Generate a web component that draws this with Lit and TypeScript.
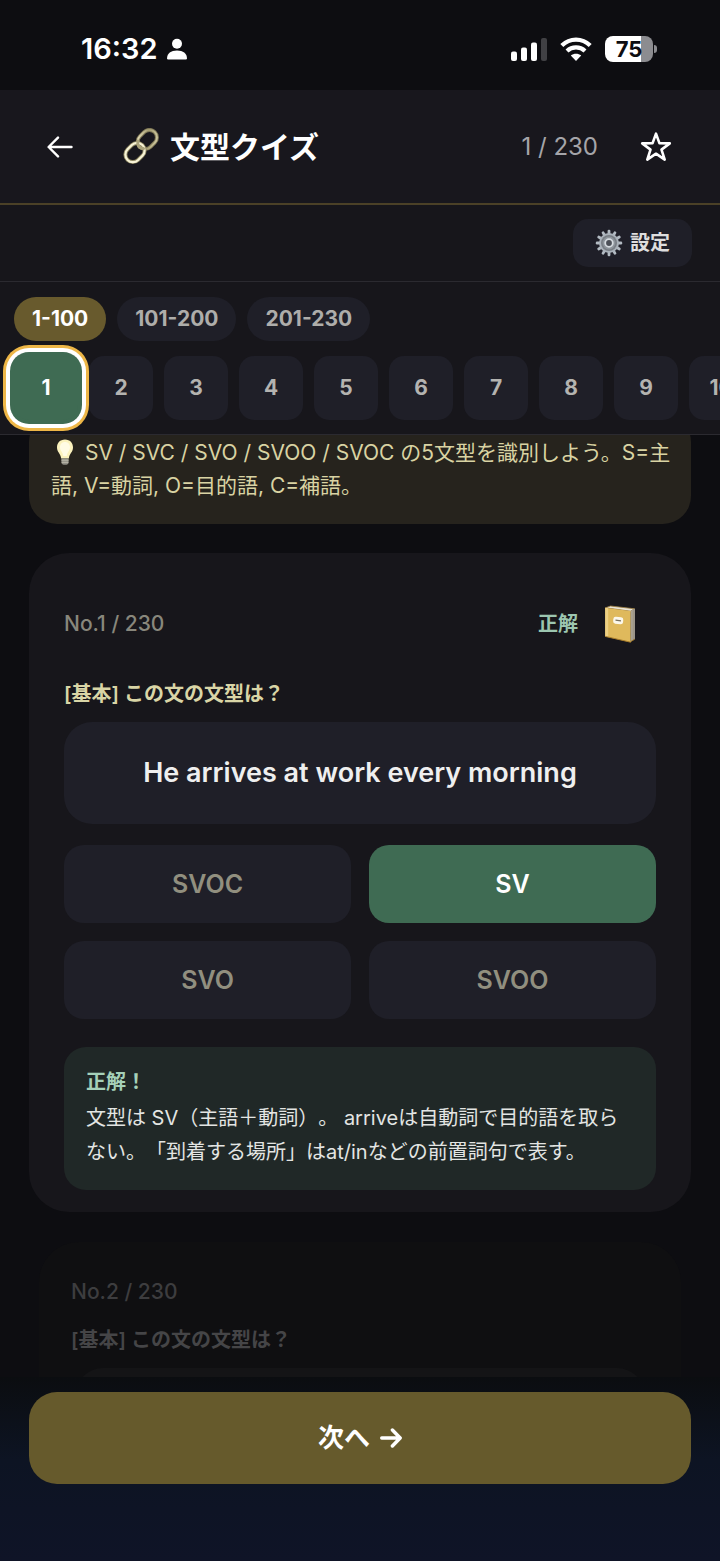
import { LitElement, html, css, svg } from "lit";
import { customElement, state } from "lit/decorators.js";
import { classMap } from "lit/directives/class-map.js";

const TOTAL = 230;

const arrowLeft = html`<svg class="ic-arrow" viewBox="0 0 26 22" aria-hidden="true">
  <path d="M24.5 11H1.8M11 1.6L1.6 11L11 20.4" fill="none" stroke="currentColor" stroke-width="2.4" stroke-linecap="round" stroke-linejoin="round"/>
</svg>`;

const arrowRight = html`<svg class="ic-next" viewBox="0 0 22 20" aria-hidden="true">
  <path d="M1.7 10H20M12.4 2L20.2 10L12.4 18" fill="none" stroke="currentColor" stroke-width="3.4" stroke-linecap="round" stroke-linejoin="round"/>
</svg>`;

const star = html`<svg class="ic-star" viewBox="0 0 32 32" aria-hidden="true">
  <path d="M16 2.6L19.4 12.1L29.8 12.4L21.5 18.6L24.7 28.6L16 22.7L7.3 28.6L10.5 18.6L2.2 12.4L12.6 12.1Z" fill="none" stroke="currentColor" stroke-width="2.6" stroke-linejoin="round"/>
</svg>`;

const linkIcon = html`<svg class="ic-link" viewBox="0 0 38 38" aria-hidden="true">
  <defs>
    <linearGradient id="lk" x1="0" y1="0" x2="1" y2="1">
      <stop offset="0" stop-color="#efe9c4"/><stop offset=".5" stop-color="#a39b70"/><stop offset="1" stop-color="#d8d2aa"/>
    </linearGradient>
  </defs>
  <g fill="none">
    <rect x="14.8" y="4" width="21" height="15" rx="7.5" transform="rotate(-45 25.3 11.5)" stroke="#7d7655" stroke-width="4"/>
    <rect x="14.8" y="4" width="21" height="15" rx="7.5" transform="rotate(-45 25.3 11.5)" stroke="url(#lk)" stroke-width="2"/>
    <rect x="2.5" y="17" width="21" height="15" rx="7.5" transform="rotate(-45 13 24.5)" stroke="#8d8661" stroke-width="4"/>
    <rect x="2.5" y="17" width="21" height="15" rx="7.5" transform="rotate(-45 13 24.5)" stroke="#f7f3d6" stroke-width="2.2"/>
    <path d="M16 13C14.800 17.500 17 20.500 21.500 20.500" stroke="#a9a27b" stroke-width="3" stroke-linecap="round"/>
  </g>
</svg>`;

const gearTeeth = Array.from({ length: 12 }, (_, i) => svg`<rect x="12.6" y="0.8" width="2.8" height="6" rx="1.2" transform="rotate(${i * 30} 14 14)"/>`);
const gear = html`<svg class="ic-gear" viewBox="0 0 28 28" aria-hidden="true">
  <g fill="#b3bbc3">${gearTeeth}</g>
  <circle cx="14" cy="14" r="10" fill="#a9b1b9"/>
  <circle cx="14" cy="14" r="8" fill="#777d84"/>
  <circle cx="14" cy="14" r="6.4" fill="#8d949b"/>
  <circle cx="14" cy="14" r="3.8" fill="#4b4f57" stroke="#d5dbe0" stroke-width="1.8"/>
</svg>`;

const bulb = html`<svg class="ic-bulb" viewBox="0 0 20 28" aria-hidden="true">
  <path d="M10 1.4C4.900 1.400 2 5 2 9.300C2 14.200 5.600 15.600 6.200 20.400H13.800C14.400 15.600 18 14.200 18 9.300C18 5 15.100 1.400 10 1.400Z" fill="#fbf2bd"/>
  <path d="M10 4C7 4 5 6.200 5 9.300C5 12.600 7.600 14 8.300 18H11.700C12.400 14 15 12.600 15 9.300C15 6.200 13 4 10 4Z" fill="#fffbe4"/>
  <path d="M6.400 20.400H13.600V24.200C13.600 26 12.200 26.800 10 26.800C7.800 26.800 6.400 26 6.400 24.200Z" fill="#8f8d84"/>
  <path d="M6.400 22.200H13.600M6.600 24.300H13.400" stroke="#c9c6b8" stroke-width=".8"/>
</svg>`;

const book = html`<svg class="ic-book" viewBox="0 0 32 38" aria-hidden="true">
  <path d="M1.500 2.800L6.500 1L30.600 3.800L26.400 6.200Z" fill="#e9e3d6" stroke="#9c7c3c" stroke-width=".8"/>
  <path d="M26.400 6L30.800 3.800V34L26.600 36.800Z" fill="#b9b1a3"/>
  <path d="M28 5.400V35.600M29.400 4.700V34.600" stroke="#857c6c" stroke-width=".6"/>
  <path d="M26.200 36.900L30.800 34.200" stroke="#9a7429" stroke-width="1"/>
  <path d="M1.200 2.800L26.600 6V37.200L1.200 31.400Z" fill="#dfb95c"/>
  <path d="M1.200 2.800L4.200 3.200V32L1.200 31.400Z" fill="#edd084"/>
  <path d="M1.200 31.400L26.600 37.200" stroke="#a87d2c" stroke-width="1"/>
  <rect x="9.200" y="12" width="10" height="7" rx="2.400" fill="#fbf7ea" transform="rotate(6 14 15.500)"/>
  <path d="M11.500 15.200L17 15.800" stroke="#77705f" stroke-width="1.300"/>
</svg>`;

@customElement("app-root")
export class AppRoot extends LitElement {
  @state() private range = 0;
  @state() private answer = "SV";

  static styles = css`
    :host {
      display: flex;
      flex-direction: column;
      height: 100vh;
      overflow: hidden;
      background: #0d0d11;
      color: #fff;
      font-family: Inter, "Noto Sans CJK JP", sans-serif;
      font-size: 20px;
      line-height: 32px;
      text-spacing-trim: space-all;
    }
    * { box-sizing: border-box; }
    button { font: inherit; color: inherit; border: 0; margin: 0; padding: 0; background: none; cursor: pointer; }
    svg { display: block; flex: none; }

    .status { display: flex; align-items: center; justify-content: space-between; flex: none; height: 90px; padding: 8px 63px 0 81px; }
    .clock { display: flex; align-items: center; gap: 9px; font-size: 29px; font-weight: 600; }
    .ic-user { width: 20px; height: 22px; }
    .signals { display: flex; align-items: center; gap: 13px; }
    .ic-cell { width: 36px; height: 24px; }
    .ic-wifi { width: 32px; height: 24px; }
    .battery { display: flex; align-items: center; gap: 1px; }
    .cell { width: 48px; height: 26px; border-radius: 8px; background: linear-gradient(90deg, #fff 75%, #8c8c90 75%); color: #0d0d11; font-size: 22px; line-height: 26px; font-weight: 700; text-align: center; }
    .nub { width: 3px; height: 8px; border-radius: 0 3px 3px 0; background: #8c8c90; }

    .head { display: flex; align-items: center; flex: none; height: 115px; padding: 0 48px 0 46px; background: #18171d; border-bottom: 2px solid #4b4127; }
    .ic-arrow { width: 28px; height: 22px; }
    .title { display: flex; align-items: center; gap: 10px; margin: 0 0 0 48px; font-size: 30px; line-height: 40px; font-weight: 700; }
    .ic-link { width: 38px; height: 38px; }
    .count { margin-left: auto; color: #a5a5a9; font-size: 24px; }
    .fav { margin-left: 42px; }
    .ic-star { width: 32px; height: 32px; }

    .tools { display: flex; justify-content: flex-end; flex: none; padding: 14px 28px; background: #17161b; border-bottom: 1px solid #2b2a30; }
    .settings { display: flex; align-items: center; gap: 7px; height: 48px; padding: 0 22px; border-radius: 15px; background: #1f1f28; color: #dedede; font-weight: 600; }
    .ic-gear { width: 28px; height: 28px; }

    .nav { flex: none; overflow: hidden; padding: 15px 14px 14px; background: #17161b; border-bottom: 1px solid #2b2a30; }
    .ranges, .numbers { display: flex; gap: 11px; font-size: 21px; font-weight: 700; }
    .range { height: 44px; padding: 0 18px; border-radius: 22px; background: #1f1f28; color: #aeadaa; }
    .range.on { background: #685a2d; color: #fff; }
    .numbers { margin-top: 15px; }
    .num { flex: none; width: 64px; height: 64px; border-radius: 15px; background: #1f1f28; color: #b4b3b0; }
    .num.on { position: relative; z-index: 1; background: #3f6b53; color: #fff; box-shadow: 0 0 0 4px #3f6b53, 0 0 0 8px #fff, 0 0 0 11px #edb647; }

    .feed { flex: 1 1 0; min-height: 0; overflow: hidden; padding: 0 29px; }
    .hint { margin: -21px 0 29px; padding: 22px 18px 22px 22px; border-radius: 28px; background: #26231d; color: #d9d3a3; font-size: 21px; line-height: 33px; }
    .hint .ic-bulb { display: inline-block; width: 20px; height: 28px; margin: 0 10px 0 4px; vertical-align: -6px; }

    .card { padding: 36px 35px 22px; border-radius: 40px; background: #17161b; }
    .row { display: flex; align-items: center; height: 70px; }
    .no { color: #88877c; font-size: 21px; font-weight: 500; }
    .state { margin-left: auto; color: #9cc6b0; font-weight: 600; }
    .save { display: grid; place-items: center; width: 72px; height: 56px; margin-left: 6px; }
    .ic-book { width: 32px; height: 38px; }
    .ask { margin: 19px 0 12px; color: #d9d5a6; font-weight: 600; }
    .sentence { margin: 0; padding: 30px 20px; border-radius: 28px; background: #1f1f28; color: #efefef; font-size: 27px; line-height: 42px; font-weight: 600; text-align: center; }
    .options { display: grid; grid-template-columns: 1fr 1fr; gap: 18px; margin-top: 21px; }
    .opt { height: 78px; border-radius: 20px; background: #1f1f28; color: #918f7f; font-size: 25px; font-weight: 600; }
    .opt.right { background: #3f6b53; color: #fff; }
    .result { margin-top: 28px; padding: 18px 22px 21px; border-radius: 22px; background: #202827; color: #e3e5e3; line-height: 34px; }
    .result strong { display: block; color: #a5d1b9; font-weight: 600; }
    .result p { margin: 2px 0 0; }

    .next-card { margin: 30px 10px 0; padding: 34px 32px; border-radius: 40px; background: #0f0f11; color: #3d3d3f; }
    .next-card .no { color: #3d3d3f; }
    .next-card .ask { margin: 16px 0 12px; color: #454547; }
    .next-card .sentence { min-height: 90px; margin: 0 4px; background: #141416; }

    .foot { flex: none; padding: 15px 29px 77px; background: linear-gradient(#0b0d10, #0d1423 45%, #0f1427); }
    .go { display: flex; align-items: center; justify-content: center; gap: 10px; width: 100%; height: 92px; border-radius: 28px; background: #665a2c; font-size: 26px; font-weight: 700; }
    .ic-next { width: 22px; height: 20px; }
  `;

  private ranges = ["1-100", "101-200", "201-230"];
  private options = ["SVOC", "SV", "SVO", "SVOO"];

  render() {
    return html`
      <div class="status">
        <div class="clock">
          <span>16:32</span>
          <svg class="ic-user" viewBox="0 0 20 22" fill="#fff" aria-hidden="true">
            <circle cx="10" cy="5.800" r="5"/><path d="M0 20.500C0 15.600 4 12.600 10 12.600C16 12.600 20 15.600 20 20.500Q20 21.600 18.800 21.600H1.200Q0 21.600 0 20.500Z"/>
          </svg>
        </div>
        <div class="signals">
          <svg class="ic-cell" viewBox="0 0 36 24" fill="#fff" aria-hidden="true">
            <rect x="0" y="14.500" width="6" height="9.500" rx="2"/><rect x="10" y="10.500" width="6" height="13.500" rx="2"/>
            <rect x="20" y="5.500" width="6" height="18.500" rx="2"/><rect x="30" y="1" width="6" height="23" rx="2" fill="#404044"/>
          </svg>
          <svg class="ic-wifi" viewBox="0 0 32 24" aria-hidden="true">
            <path d="M1.800 8.600C9.800 .6 22.200 .6 30.200 8.600" fill="none" stroke="#fff" stroke-width="4.200"/>
            <path d="M7 14C12 9.200 20 9.200 25 14" fill="none" stroke="#fff" stroke-width="4.200"/>
            <path d="M16 24L10.800 18.600C13.700 16 18.300 16 21.200 18.600Z" fill="#fff"/>
          </svg>
          <div class="battery"><span class="cell">75</span><span class="nub"></span></div>
        </div>
      </div>

      <header class="head">
        <button aria-label="戻る">${arrowLeft}</button>
        <h1 class="title">${linkIcon}<span>文型クイズ</span></h1>
        <span class="count">1 / ${TOTAL}</span>
        <button class="fav" aria-label="お気に入り">${star}</button>
      </header>

      <div class="tools"><button class="settings">${gear}<span>設定</span></button></div>

      <nav class="nav">
        <div class="ranges">
          ${this.ranges.map((r, i) => html`<button class=${classMap({ range: true, on: i === this.range })} @click=${() => (this.range = i)}>${r}</button>`)}
        </div>
        <div class="numbers">
          ${Array.from({ length: 10 }, (_, i) => html`<button class=${classMap({ num: true, on: i === 0 })}>${i + 1}</button>`)}
        </div>
      </nav>

      <main class="feed">
        <div class="hint">${bulb}SV / SVC / SVO / SVOO / SVOC の5文型を識別しよう。S=主語, V=動詞, O=目的語, C=補語。</div>
        <section class="card">
          <div class="row">
            <span class="no">No.1 / ${TOTAL}</span>
            <span class="state">正解</span>
            <button class="save" aria-label="単語帳">${book}</button>
          </div>
          <p class="ask">[基本] この文の文型は？</p>
          <p class="sentence">He arrives at work every morning</p>
          <div class="options">
            ${this.options.map((o) => html`<button class=${classMap({ opt: true, right: o === this.answer })} @click=${() => (this.answer = o)}>${o}</button>`)}
          </div>
          <div class="result">
            <strong>正解！</strong>
            <p>文型は SV（主語＋動詞）。 arriveは自動詞で目的語を取らない。「到着する場所」はat/inなどの前置詞句で表す。</p>
          </div>
        </section>
        <section class="next-card">
          <span class="no">No.2 / ${TOTAL}</span>
          <p class="ask">[基本] この文の文型は？</p>
          <div class="sentence"></div>
        </section>
      </main>

      <footer class="foot"><button class="go"><span>次へ</span>${arrowRight}</button></footer>
    `;
  }
}
